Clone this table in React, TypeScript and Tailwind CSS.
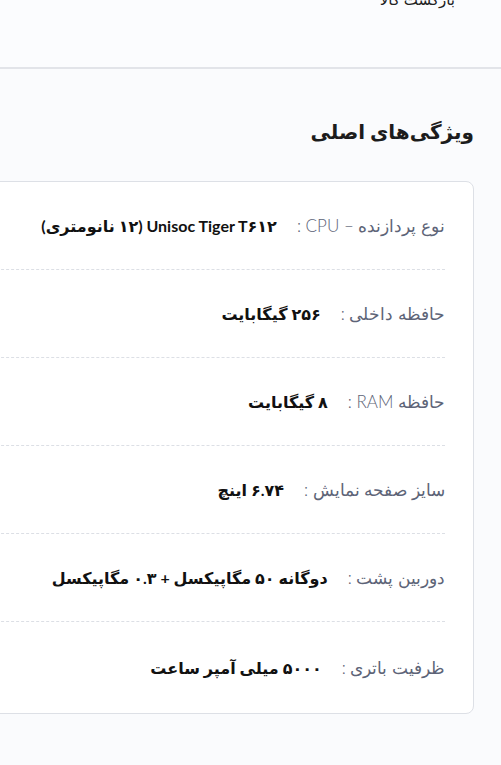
import React from 'react';

type Spec = { label: string; value: string };

const specs: Spec[] = [
  { label: 'نوع پردازنده – CPU :', value: 'Unisoc Tiger T۶۱۲ (۱۲ نانومتری)' },
  { label: 'حافظه داخلی :', value: '۲۵۶ گیگابایت' },
  { label: 'حافظه RAM :', value: '۸ گیگابایت' },
  { label: 'سایز صفحه نمایش :', value: '۶.۷۴ اینچ' },
  { label: 'دوربین پشت :', value: 'دوگانه ۵۰ مگاپیکسل + ۰.۳ مگاپیکسل' },
  { label: 'ظرفیت باتری :', value: '۵۰۰۰ میلی آمپر ساعت' },
];

const App: React.FC = () => {
  return (
    <div
      dir="rtl"
      className="h-[765px] w-[501px] overflow-hidden bg-[#fafbfd] font-['Lato','DejaVu_Sans',sans-serif]"
    >
      {/* previous section, cut off at top */}
      <div className="flex h-[69px] items-start border-b-2 border-[#e2e4e9] bg-[#fbfcfe]">
        <div className="mr-[46px] mt-[-12px] text-[15px] text-[#222]">بازگشت کالا</div>
      </div>

      <h2 className="mr-[27px] mt-[46px] text-[20px] font-bold leading-[32px] text-[#1c1c1c]">
        ویژگی‌های اصلی
      </h2>

      <div className="ml-[-40px] mr-[27px] mt-[34px] rounded-lg border border-[#dde0e6] bg-white">
        {specs.map((s, i) => (
          <div
            key={i}
            className={
              'mr-7 flex items-center gap-5 ' +
              (i === specs.length - 1
                ? 'h-[91px]'
                : 'h-[88px] border-b border-dashed border-[#dcdfe5]')
            }
          >
            <span className="text-[17px] font-light text-[#5d6477]">{s.label}</span>
            <span className="text-[16px] font-bold text-[#111]">{s.value}</span>
          </div>
        ))}
      </div>
    </div>
  );
};

export default App;
